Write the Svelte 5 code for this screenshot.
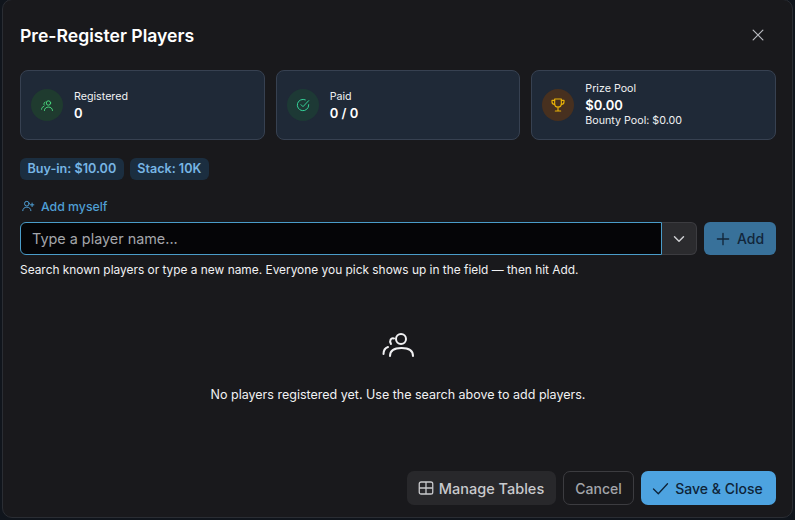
<script>
  const stats = [
    { label: 'Registered', value: '0', tone: 'green', icon: 'users' },
    { label: 'Paid', value: '0 / 0', tone: 'teal', icon: 'check' },
    { label: 'Prize Pool', value: '$0.00', extra: 'Bounty Pool: $0.00', tone: 'amber', icon: 'trophy' }
  ];
</script>

<div class="backdrop">
  <section class="modal">
    <header class="head">
      <h1>Pre-Register Players</h1>
      <button class="close" aria-label="Close">
        <svg viewBox="0 0 24 24" width="18" height="18" fill="none" stroke="currentColor" stroke-width="1.6" stroke-linecap="round"><path d="M5.500 5.500l13 13M18.500 5.500l-13 13"/></svg>
      </button>
    </header>

    <div class="stats">
      {#each stats as s}
        <div class="stat">
          <div class="badge {s.tone}">
            {#if s.icon === 'users'}
              <svg viewBox="0 0 24 24" width="15" height="15" fill="none" stroke="currentColor" stroke-width="1.500" stroke-linecap="round" stroke-linejoin="round"><circle cx="13.500" cy="8" r="3.500"/><path d="M7 20c0-3.500 3-5.500 6.500-5.500S20 16.500 20 20"/><path d="M8 6.500a3 3 0 0 0-1 5M2.500 18c0-2.500 1.500-4 3.500-4.500"/></svg>
            {:else if s.icon === 'check'}
              <svg viewBox="0 0 24 24" width="16" height="16" fill="none" stroke="currentColor" stroke-width="1.500" stroke-linecap="round" stroke-linejoin="round"><path d="M20.500 11.500V12a8.500 8.500 0 1 1-5-7.750"/><path d="M9 11.500l3 3 8.500-9"/></svg>
            {:else}
              <svg viewBox="0 0 24 24" width="16" height="16" fill="none" stroke="currentColor" stroke-width="1.700" stroke-linecap="round" stroke-linejoin="round"><path d="M7 3h10v7a5 5 0 0 1-10 0z"/><path d="M7 5H3v2a4 4 0 0 0 4 4M17 5h4v2a4 4 0 0 1-4 4"/><path d="M12 15v5M8 21h8"/></svg>
            {/if}
          </div>
          <div class="stat-text">
            <div class="label">{s.label}</div>
            <div class="value">{s.value}</div>
            {#if s.extra}<div class="label">{s.extra}</div>{/if}
          </div>
        </div>
      {/each}
    </div>

    <div class="chips">
      <span class="chip">Buy-in: $10.00</span>
      <span class="chip">Stack: 10K</span>
    </div>

    <button class="add-self">
      <svg viewBox="0 0 24 24" width="14" height="14" fill="none" stroke="currentColor" stroke-width="1.700" stroke-linecap="round" stroke-linejoin="round"><circle cx="10" cy="8" r="4"/><path d="M3 20c0-3.500 3-6 7-6s7 2.500 7 6"/><path d="M19 7v6M16 10h6"/></svg>
      Add myself
    </button>

    <div class="entry">
      <div class="combo">
        <input placeholder="Type a player name..." />
        <span class="caret">
          <svg viewBox="0 0 24 24" width="18" height="18" fill="none" stroke="currentColor" stroke-width="1.900" stroke-linecap="round" stroke-linejoin="round"><path d="M6 9l6 6 6-6"/></svg>
        </span>
      </div>
      <button class="add">
        <svg viewBox="0 0 24 24" width="18" height="18" fill="none" stroke="currentColor" stroke-width="1.800" stroke-linecap="round"><path d="M12 4.500v15M4.500 12h15"/></svg>
        Add
      </button>
    </div>
    <p class="hint">Search known players or type a new name. Everyone you pick shows up in the field — then hit Add.</p>

    <div class="empty">
      <svg viewBox="0 0 32 24" width="32" height="24" fill="none" stroke="currentColor" stroke-width="2" stroke-linecap="round" stroke-linejoin="round"><circle cx="19" cy="6" r="5"/><path d="M8 23c0-5 4-8 11.500-8S31 18 31 23"/><path d="M12 5.500c-3-1-5 2-3 5.500"/><path d="M1.500 21c0-3 1.500-6 4.500-7"/></svg>
      <p>No players registered yet. Use the search above to add players.</p>
    </div>

    <footer class="foot">
      <button class="btn ghost">
        <svg viewBox="0 0 24 24" width="18" height="18" fill="none" stroke="currentColor" stroke-width="1.700" stroke-linejoin="round"><rect x="3" y="4" width="18" height="16" rx="2.500"/><path d="M3 12h18M12 4v16"/></svg>
        Manage Tables
      </button>
      <button class="btn outline">Cancel</button>
      <button class="btn primary">
        <svg viewBox="0 0 24 24" width="21" height="21" fill="none" stroke="currentColor" stroke-width="1.500" stroke-linecap="round" stroke-linejoin="round"><path d="M4 12.500l5.500 5.500L20 6.500"/></svg>
        Save &amp; Close
      </button>
    </footer>
  </section>
</div>

<style>
  :global(body) {
    margin: 0;
    background: #10151c;
    font-family: Inter, "Liberation Sans", sans-serif;
  }
  .backdrop {
    height: 520px;
    padding: 0 2px;
    box-sizing: border-box;
    overflow: hidden;
  }
  .modal {
    height: 519px;
    box-sizing: border-box;
    margin-top: -1px;
    padding: 0 16px 12px 17px;
    background: #19191c;
    border: 1px solid #2a2d33;
    border-radius: 10px;
    display: flex;
    flex-direction: column;
    color: #fff;
  }
  button { font-family: inherit; }
  .head {
    height: 70px;
    flex: none;
    display: flex;
    align-items: center;
    justify-content: space-between;
  }
  h1 { margin: 0; font-size: 17.600px; font-weight: 600; color: #fff; }
  .close {
    display: flex;
    padding: 0;
    margin-right: 9px;
    background: none;
    border: 0;
    color: #b9bbc0;
  }
  .stats {
    display: grid;
    grid-template-columns: repeat(3, 1fr);
    gap: 11px;
  }
  .stat {
    height: 70px;
    box-sizing: border-box;
    display: flex;
    align-items: center;
    gap: 11px;
    padding: 0 10px;
    background: #1f2937;
    border: 1px solid #374151;
    border-radius: 8px;
  }
  .badge {
    width: 32px;
    height: 32px;
    border-radius: 50%;
    display: flex;
    align-items: center;
    justify-content: center;
    flex: none;
  }
  .green { background: #1f3b2f; color: #4ade80; }
  .teal { background: #1d3935; color: #34d399; }
  .amber { background: #47301f; color: #eab308; }
  .stat-text { display: flex; flex-direction: column; }
  .label { font-size: 10.700px; line-height: 16px; color: #f0f1f3; }
  .value { font-size: 13px; line-height: 16px; font-weight: 600; color: #fff; }
  .chips { display: flex; gap: 6px; margin-top: 18px; }
  .chip {
    height: 22px;
    line-height: 22px;
    padding: 0 7.500px;
    border-radius: 6px;
    background: #1b2e40;
    color: #77b5e4;
    font-size: 12.600px;
    font-weight: 600;
  }
  .add-self {
    align-self: flex-start;
    display: flex;
    align-items: center;
    gap: 6px;
    margin-top: 18px;
    padding: 0 0 0 1px;
    height: 16px;
    background: none;
    border: 0;
    color: #4f9fd4;
    font-size: 12.300px;
    font-weight: 500;
  }
  .entry { display: flex; gap: 7px; margin-top: 8px; }
  .combo { flex: 1; display: flex; height: 33px; }
  input {
    flex: 1;
    min-width: 0;
    box-sizing: border-box;
    padding: 0 11px;
    background: #050507;
    border: 1px solid #4a9cc9;
    border-radius: 6px 0 0 6px;
    outline: none;
    color: #fff;
    font-family: inherit;
    font-size: 14.400px;
  }
  input::placeholder { color: #a3a5aa; opacity: 1; }
  .caret {
    width: 35px;
    box-sizing: border-box;
    display: flex;
    align-items: center;
    justify-content: center;
    background: #2b2b2e;
    border: 1px solid #3c3c40;
    border-left: 0;
    border-radius: 0 6px 6px 0;
    color: #d0d1d4;
  }
  .add {
    width: 72px;
    height: 33px;
    display: flex;
    align-items: center;
    justify-content: center;
    gap: 5px;
    padding: 0 2px 0 0;
    background: #38719a;
    border: 0;
    border-radius: 6px;
    color: #12263a;
    font-size: 14px;
    font-weight: 500;
  }
  .hint { margin: 7px 0 0; font-size: 11.900px; line-height: 16px; color: #f1f1f3; }
  .empty {
    flex: 1;
    display: flex;
    flex-direction: column;
    align-items: center;
    padding-top: 55px;
    color: #f1f1f3;
  }
  .empty p { margin: 30px 0 0; font-size: 12.500px; line-height: 16px; }
  .foot { display: flex; justify-content: flex-end; gap: 7px; }
  .btn {
    height: 34px;
    display: flex;
    align-items: center;
    justify-content: center;
    gap: 6px;
    box-sizing: border-box;
    border-radius: 7px;
    font-size: 14px;
    font-weight: 500;
  }
  .ghost { width: 149px; padding: 0 2px 0 0; gap: 4px; background: #28282b; border: 0; color: #c9cacd; font-size: 14.500px; }
  .outline { width: 71px; background: #19191c; border: 1px solid #3c3c40; color: #a3a5aa; }
  .primary { width: 135px; padding: 0 4.500px 0 0; gap: 4.500px; background: #4da3e0; border: 0; color: #0e2338; }
</style>
